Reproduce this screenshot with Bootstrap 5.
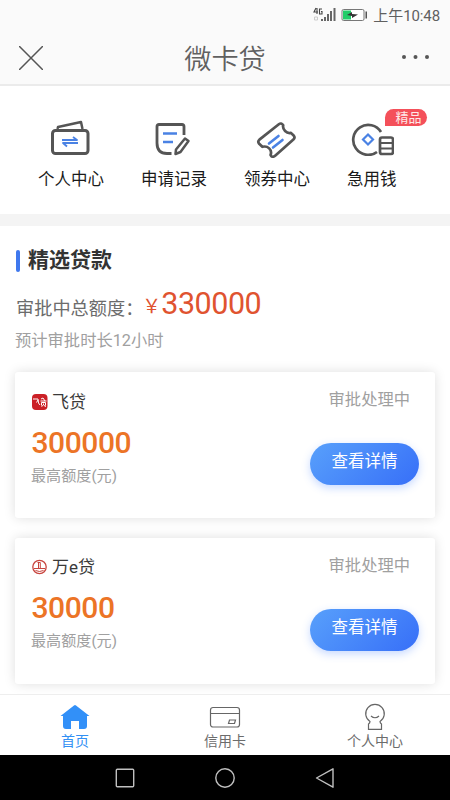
<!DOCTYPE html>
<html lang="zh-CN">
<head>
<meta charset="utf-8">
<meta name="viewport" content="width=device-width, initial-scale=1">
<title>微卡贷</title>
<link href="https://cdn.jsdelivr.net/npm/bootstrap@5.3.0/dist/css/bootstrap.min.css" rel="stylesheet">
<style>
  body { font-family: Roboto, "Noto Sans CJK SC", sans-serif; width: 450px; height: 800px; background: #fff; color: #333; }
  svg { display: block; flex: none; }
  .t { white-space: nowrap; }
  .app-head { height: 86px; background: #fafafa; border-bottom: 2px solid #ebebeb; }
  .status { height: 31px; padding-right: 10px; }
  .clock { font-size: 15px; line-height: 31px; color: #606060; letter-spacing: -.1px; padding-top: 1px; margin-left: 5px; }
  .title-row { height: 53px; padding: 0 20px 0 19px; }
  .page-title { font-size: 27.2px; line-height: 47px; padding: 6px 0 0 6px; color: #606060; font-weight: 350; }
  .menu { height: 128px; padding: 32px 0 0 38px; }
  .menu-cell { width: 103px; }
  .menu-label { font-size: 16.5px; line-height: 24px; color: #1a1a1a; margin-top: 12px; }
  .menu-label.near { margin-top: 10px; }
  .tag { top: -9px; left: 38px; width: 42px; height: 17px; padding-left: 5px; background: #f4505a; border-radius: 9px 9px 9px 0; color: #ffe8e8; font-size: 13px; line-height: 17px; }
  .band { height: 12px; background: #f4f4f4; }
  .loans { height: 468px; padding: 21px 15px 0; overflow: hidden; }
  .bar { width: 4px; height: 22px; border-radius: 2px; background: #3f78ee; margin: 2px 0 0 1px; }
  .sec-title { font-size: 21px; line-height: 26px; font-weight: 700; color: #333; margin-left: 8px; }
  .total { height: 40px; margin-top: 11px; padding-left: 1px; font-size: 18.2px; line-height: 40px; color: #6c6c6c; }
  .lead-text { padding-top: 5px; }
  .amount { font-size: 30.5px; line-height: 40px; color: #e05330; letter-spacing: -.5px; margin-left: 2px; }
  .yen { font-size: 18.8px; line-height: 40px; color: #e05330; width: 17px; margin-left: -1px; padding-top: 3px; }
  .eta { font-size: 16.3px; line-height: 22px; height: 22px; color: #a0a0a0; margin-top: 6px; }
  .loan { height: 146px; padding: 17px 16px 0 17px; border-radius: 3px; background: #fff; box-shadow: 0 0 12px rgba(0,0,0,.13); }
  .loan-a { margin-top: 20px; }
  .loan-b { margin-top: 20px; padding-top: 16px; }
  .name { font-size: 17px; line-height: 25px; color: #3a3a3a; margin-left: 4px; padding-top: 1px; }
  .state { font-size: 16.3px; line-height: 22px; color: #a0a0a0; margin-right: 9px; }
  .loan-b .state { padding-top: 1px; }
  .limit { font-size: 30px; line-height: 34px; font-weight: 500; color: #ec7426; margin-top: 11px; letter-spacing: -.45px; margin-left: -.5px; }
  .hint { font-size: 15.1px; line-height: 22px; color: #a0a0a0; margin: 5px 0 0 -1px; }
  .detail { width: 109px; height: 42px; margin-top: 32px; border-radius: 21px; background: linear-gradient(135deg, #58a0fb, #376ff8); box-shadow: 0 3px 9px rgba(70,130,255,.3); color: #fff; font-size: 16.5px; line-height: 36px; border: 0; padding: 0 0 5px; }
  .tabs { height: 61px; background: #fff; border-top: 1px solid #eee; padding-top: 8px; }
  .tab-item { width: 150px; color: #6c6c6c; font-size: 14px; line-height: 20px; }
  .tab-item.on { color: #3290f4; }
  .tab-item .t { margin-top: 1px; }
  .sysnav { height: 45px; background: #000; padding-left: 115px; gap: 80px; }
</style>
</head>
<body class="overflow-hidden m-0">
<header class="app-head">
  <div class="status d-flex justify-content-end align-items-center">
    <svg width="24" height="17" viewBox="0 0 24 17" fill="#666">
      <path d="M3 1 1 5h4M4 1v6M9 2H6.500v5h2.500V4.500H8" fill="none" stroke="#444" stroke-width="1.100"/>
      <path d="M1.500 10h3v3h-3z" fill="none" stroke="#ccc"/>
      <path d="M8 12h2v2H8zM11 10h2v4h-2zM14 7h2v7h-2zM17 4h2v10h-2zM20.500 1h2v13h-2z"/>
    </svg>
    <svg class="ms-1" width="27" height="17" viewBox="0 0 27 17">
      <rect x="1" y="2.500" width="22" height="11" rx="1.500" fill="#fff" stroke="#777"/>
      <path d="M2 3.500h8v9H2z" fill="#20cd68"/>
      <path d="M6 8l5-3v2l6 .500-6 3.500V9z" fill="#333"/>
      <path d="M24.500 4.500h1.500v7h-1.500z" fill="#555"/>
    </svg>
    <span class="clock t">上午10:48</span>
  </div>
  <div class="title-row d-flex justify-content-between align-items-center">
    <svg width="24" height="24" viewBox="0 0 24 24" stroke="#555" stroke-width="1.500"><path d="M0 0l24 24M24 0 0 24"/></svg>
    <span class="page-title t">微卡贷</span>
    <svg width="29" height="6" viewBox="0 0 29 6" fill="#555"><circle cx="3" cy="2" r="2"/><circle cx="14.500" cy="2" r="2"/><circle cx="26" cy="2" r="2"/></svg>
  </div>
</header>

<nav class="menu d-flex">
  <div class="menu-cell d-flex"><div class="d-flex flex-column align-items-center">
    <svg width="40" height="38" viewBox="0 0 40 38" fill="none" stroke="#555" stroke-width="3" stroke-linejoin="round">
      <rect x="1.500" y="12.500" width="35.500" height="23" rx="3"/><path d="M6.500 11 7 9 30 4 31.500 11" stroke-width="2.500"/>
      <path d="M11 22h15l-4-3M27 25H12l4 3.500" stroke="#4a82e4" stroke-width="1.800"/>
    </svg>
    <span class="menu-label t">个人中心</span>
  </div></div>
  <div class="menu-cell d-flex"><div class="d-flex flex-column align-items-center">
    <svg width="40" height="38" viewBox="0 0 40 38" fill="none" stroke="#555" stroke-width="2.800" stroke-linejoin="round">
      <path d="M30 17V8.500Q30 6.500 28 6.500H5Q3 6.500 3 8.500V25Q3 35.500 13 35.500H17.500"/>
      <path d="M31 20.500 34.500 23 26.500 34 21.500 36 22 31.500z" stroke-width="2.500"/>
      <path d="M9 15.500h14M9 24h10" stroke="#4a82e4" stroke-width="2.400"/>
    </svg>
    <span class="menu-label t">申请记录</span>
  </div></div>
  <div class="menu-cell d-flex"><div class="d-flex flex-column align-items-center">
    <svg width="42" height="40" viewBox="0 0 42 40" fill="none" stroke="#555" stroke-width="2.800" stroke-linejoin="round">
      <path d="M2.500 22.500 22.500 6.500Q25 4.500 27 7.500C26 12 30.500 16.500 35 15.500L38 18.500Q39.500 20.500 37.500 22.500L19 39Q15.500 42 14 38.500C16 33 11 28.500 5.500 30L2 26.500Q.500 24.500 2.500 22.500z" transform="translate(1 0) scale(.97 .96)"/>
      <path d="M13 25.500 22.500 18M17 29.500 26.500 22" stroke="#4a82e4" stroke-width="2.600" stroke-linecap="round"/>
    </svg>
    <span class="menu-label near t">领券中心</span>
  </div></div>
  <div class="menu-cell d-flex"><div class="d-flex flex-column align-items-center position-relative">
    <svg width="44" height="38" viewBox="0 0 44 38" fill="none" stroke="#555" stroke-width="2.700">
      <path d="M31 14A15 15 0 1 0 27 34"/>
      <rect x="30" y="19.500" width="13" height="16.500" rx="2"/><path d="M30 25h13M30 30.500h13" stroke-width="2.200"/>
      <path d="M18 16.500 23 21.500 18 26.500 13 21.500z" stroke="#4a82e4" stroke-width="2.200"/>
    </svg>
    <span class="menu-label t">急用钱</span>
    <span class="tag t position-absolute text-center">精品</span>
  </div></div>
</nav>
<div class="band"></div>

<main class="loans">
  <div class="d-flex align-items-center"><span class="bar"></span><h1 class="sec-title t mb-0">精选贷款</h1></div>
  <div class="total d-flex t"><span class="lead-text">审批中总额度：</span><span class="yen">￥</span><span class="amount">330000</span></div>
  <div class="eta t">预计审批时长12小时</div>

  <section class="loan loan-a d-flex justify-content-between">
    <div>
      <div class="d-flex align-items-center">
        <svg width="16" height="16" viewBox="0 0 16 16"><rect width="15.500" height="16" rx="4" fill="#cb2026"/><path d="M1 5h5q0 5 2 6M6 6 4.500 8.500M9 5l2-1M8.500 7h6M11 4l2 3M9.500 8.500v3M9.500 8.500h4v3M11.500 9.500v1.500l-2 1.500M12 11.500l2 1" fill="none" stroke="#fff"/></svg>
        <span class="name t">飞贷</span>
      </div>
      <div class="limit t">300000</div>
      <div class="hint t">最高额度(元)</div>
    </div>
    <div class="d-flex flex-column align-items-end">
      <span class="state t">审批处理中</span>
      <button class="detail t" type="button">查看详情</button>
    </div>
  </section>

  <section class="loan loan-b d-flex justify-content-between">
    <div>
      <div class="d-flex align-items-center">
        <svg width="16" height="16" viewBox="0 0 16 16" fill="none" stroke="#c8453f"><circle cx="7.500" cy="8" r="6.700" stroke-width="1.300"/><path d="M5.500 3.500h2.800v6M6.500 3.500V9M2 9.500h11M3.500 11.500q4 2 8 0"/></svg>
        <span class="name t">万e贷</span>
      </div>
      <div class="limit t">30000</div>
      <div class="hint t">最高额度(元)</div>
    </div>
    <div class="d-flex flex-column align-items-end">
      <span class="state t">审批处理中</span>
      <button class="detail t" type="button">查看详情</button>
    </div>
  </section>
</main>

<nav class="tabs d-flex">
  <div class="tab-item on d-flex flex-column align-items-center">
    <svg width="30" height="27" viewBox="0 0 30 27"><path d="M14 2.500q1-.800 2 0L29.500 13H27v10q0 3-3 3h-5v-8h-8v8H6q-3 0-3-3V13H.5z" fill="#3290f8"/></svg>
    <span class="t">首页</span>
  </div>
  <div class="tab-item d-flex flex-column align-items-center">
    <svg width="32" height="27" viewBox="0 0 32 27" fill="none" stroke="#666" stroke-width="1.200"><rect x="1.500" y="4.500" width="29" height="19.500" rx="2.500"/><path d="M1.500 10.500h29M20.500 17h6l-1 3.500h-6z"/></svg>
    <span class="t">信用卡</span>
  </div>
  <div class="tab-item d-flex flex-column align-items-center">
    <svg width="24" height="27" viewBox="0 0 24 27" fill="none" stroke="#666" stroke-width="1.200"><path d="M7 18.500a9.300 9.300 0 1 1 10 0Q17 20 18.500 21v5.300h-13V21Q7 20 7 18.500zM8 13q4 3.500 8 0"/></svg>
    <span class="t">个人中心</span>
  </div>
</nav>
<footer class="sysnav d-flex align-items-center">
  <svg width="20" height="20" viewBox="0 0 20 20" fill="none" stroke="#c0c0c0" stroke-width="1.400"><rect x="1.300" y="1.300" width="17.400" height="17.400" rx="1"/></svg>
  <svg width="20" height="20" viewBox="0 0 20 20" fill="none" stroke="#c0c0c0" stroke-width="1.400"><circle cx="10" cy="10" r="9.200"/></svg>
  <svg width="20" height="20" viewBox="0 0 20 20" fill="none" stroke="#c0c0c0" stroke-width="1.400" stroke-linejoin="round"><path d="M18 .8v18.400L1.500 10z"/></svg>
</footer>
<script src="https://cdn.jsdelivr.net/npm/bootstrap@5.3.0/dist/js/bootstrap.bundle.min.js"></script>
</body>
</html>
